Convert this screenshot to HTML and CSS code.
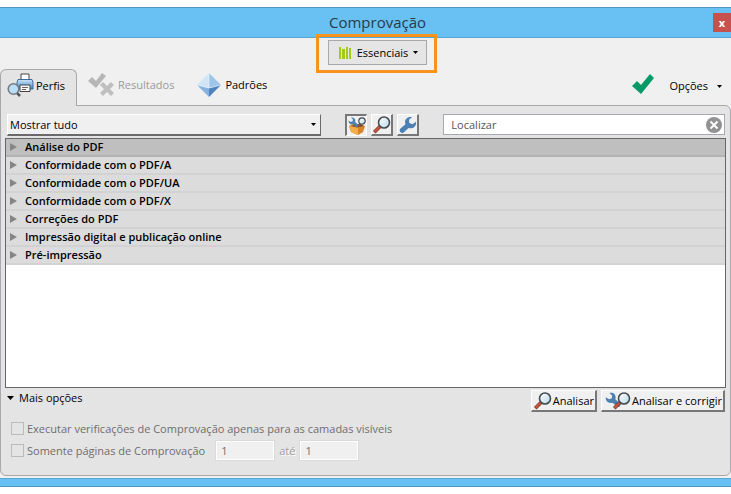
FILE: index.html
```html
<!DOCTYPE html>
<html lang="pt-BR">
<head>
<meta charset="utf-8">
<title>Comprovação</title>
<link rel="stylesheet" href="styles.css">
</head>
<body>
<svg class="defs" width="0" height="0" aria-hidden="true">
  <defs>
    <linearGradient id="lens" x1="0" y1="0" x2="1" y2="1"><stop offset="0" stop-color="#fff"/><stop offset="1" stop-color="#b9d9e8"/></linearGradient>
    <linearGradient id="feed" x1="0" y1="0" x2="0" y2="1"><stop offset="0" stop-color="#cfe6f8"/><stop offset="1" stop-color="#3f86cc"/></linearGradient>
  </defs>
  <symbol id="magnifier" viewBox="0 0 18 18">
    <path d="M7 10.500 2.500 15" stroke="#6b3028" stroke-width="3.500" stroke-linecap="square"/>
    <path d="M6.500 11 2.500 15" stroke="#c8553c" stroke-width="2.400" stroke-linecap="square"/>
    <circle cx="11" cy="6.500" r="5.500" fill="url(#lens)" stroke="#454b4f" stroke-width="1.600"/>
  </symbol>
  <symbol id="wrench" viewBox="0 0 18 18">
    <path d="M17 5.800 13.500 8.200 10.300 7 10 3.800 13 1.200C9.200 0 6 2.600 6 6.300L6.400 8.200 1.500 12.400C-.6 14.500 1.500 18 4.400 16.700L9.600 12C14.200 13.200 17.800 10 17 5.800Z" fill="#4c80b3"/>
  </symbol>
</svg>
<main class="window">
  <header class="titlebar">
    <h1>Comprovação</h1>
    <button class="close" type="button" aria-label="Fechar">x</button>
  </header>
  <div class="content">
    <div class="library">
      <div class="highlight">
        <button class="library-button" type="button">
          <svg width="13" height="12" viewBox="0 0 13 12" shape-rendering="crispEdges"><path d="M0 0h2v12H0zM3 2h3v10H3zM7 0h2v12H7zM10 1h2v11h-2z" fill="#a2cb1b"/></svg>
          Essenciais
          <svg class="caret" width="5" height="3" viewBox="0 0 5 3"><path d="M0 0h5L2.500 3z"/></svg>
        </button>
      </div>
    </div>
    <nav class="tabs">
      <button class="tab active" type="button">
        <svg width="27" height="25" viewBox="0 0 27 25">
          <path d="M14 1h8v7h-8z" fill="#fff" stroke="#444"/>
          <path d="M11 6.500h14l1 3v6.500h-16V9.500z" fill="url(#feed)" stroke="#396c9d"/>
          <path d="M13 12h10v6.500H13z" fill="#f8f8f8" stroke="#444"/>
          <path d="M15 14.500h6M15 16.500h4" stroke="#666"/>
          <path d="M9.500 19.500 13 23" stroke="#50555a" stroke-width="2.500"/>
          <circle cx="6.500" cy="16" r="5.300" fill="#b9def5" stroke="#727a80" stroke-width="1.500"/>
        </svg>
        Perfis
      </button>
      <button class="tab results" type="button" disabled>
        <svg width="26" height="24" viewBox="0 0 26 24"><path d="M0 8 4 4l4 4 6-8 4 3L8 15z" fill="#b6b6b6"/><path d="m12 12 3-3 4 4 4-4 3 3-4 4 4 4-3 3-4-4-4 4-3-3 4-4z" fill="#bfbfbf"/></svg>
        Resultados
      </button>
      <button class="tab standards" type="button">
        <svg width="24" height="24" viewBox="0 0 24 24"><path d="M12 0 0 12l12 3z" fill="#d2e5f7"/><path d="m12 0 12 12-12 3z" fill="#9dc5e9"/><path d="m0 12 12 3v9z" fill="#87b2df"/><path d="m24 12-12 3v9z" fill="#4d84bd"/><path d="M12 0v15L0 12m12 3 12-3" stroke="#e5f1fb" fill="none" stroke-width=".7"/></svg>
        Padrões
      </button>
      <svg class="status" width="24" height="22" viewBox="0 0 24 22"><path d="m1 13 5-5 4 4L19 1l4 4L10 21z" fill="#079a67"/></svg>
      <button class="options" type="button">Opções
        <svg class="caret" width="5" height="3" viewBox="0 0 5 3"><path d="M0 0h5L2.500 3z"/></svg>
      </button>
    </nav>
    <section class="panel">
      <div class="filters">
        <div class="picker">
          <select aria-label="Mostrar"><option>Mostrar tudo</option></select>
          <svg class="caret" width="5" height="3" viewBox="0 0 5 3"><path d="M0 0h5L2.500 3z"/></svg>
        </div>
        <div class="modes">
          <button class="raised pressed" type="button" aria-label="Perfis">
            <svg width="18" height="18" viewBox="0 0 18 18"><path d="m1 9 4-2 9 1 3 1-2 6-5 3-7-3z" fill="#d98424"/><path d="m1 9 9 2v7l-7-3z" fill="#f4ad48"/><path d="m3 9 7 1 6-1-5-2z" fill="#5d4128"/><use href="#wrench" width="11" height="11" transform="translate(11 0) scale(-1 1)"/><path d="m13 6-3 4" stroke="#a24b38" stroke-width="2"/><circle cx="14" cy="4" r="3.200" fill="url(#lens)" stroke="#454b4f" stroke-width="1.200"/></svg>
          </button>
          <button class="raised" type="button" aria-label="Verificações"><svg width="18" height="18"><use href="#magnifier"/></svg></button>
          <button class="raised" type="button" aria-label="Correções"><svg width="18" height="18"><use href="#wrench"/></svg></button>
        </div>
        <div class="search">
          <input type="text" placeholder="Localizar" aria-label="Localizar">
          <button type="button" aria-label="Limpar"><svg width="16" height="16" viewBox="0 0 16 16"><circle cx="8" cy="8" r="8" fill="#929292"/><path d="m4.500 4.500 7 7m0-7-7 7" stroke="#fff" stroke-width="2"/></svg></button>
        </div>
      </div>
      <ul class="profiles">
        <li class="selected"><button type="button">Análise do PDF</button></li>
        <li><button type="button">Conformidade com o PDF/A</button></li>
        <li><button type="button">Conformidade com o PDF/UA</button></li>
        <li><button type="button">Conformidade com o PDF/X</button></li>
        <li><button type="button">Correções do PDF</button></li>
        <li><button type="button">Impressão digital e publicação online</button></li>
        <li><button type="button">Pré-impressão</button></li>
      </ul>
      <div class="actions">
        <button class="more" type="button"><svg class="caret" width="7" height="4" viewBox="0 0 7 4"><path d="M0 0h7L3.500 4z"/></svg>Mais opções</button>
        <button class="raised action" type="button"><svg width="18" height="18"><use href="#magnifier"/></svg>Analisar</button>
        <button class="raised action" type="button"><svg width="27" height="18" viewBox="0 0 27 18"><use href="#wrench" width="16" height="16" transform="translate(17 0) scale(-1 1)"/><use href="#magnifier" x="9" width="18" height="18"/></svg>Analisar e corrigir</button>
      </div>
      <div class="settings">
        <div class="setting">
          <input type="checkbox" id="layers" disabled>
          <label for="layers">Executar verificações de Comprovação apenas para as camadas visíveis</label>
        </div>
        <div class="setting">
          <input type="checkbox" id="pages" disabled>
          <label for="pages">Somente páginas de Comprovação</label>
          <input class="page first" type="text" value="1" aria-label="Primeira página" disabled>
          <label class="until" for="last">até</label>
          <input class="page" id="last" type="text" value="1" disabled>
        </div>
      </div>
    </section>
  </div>
</main>
</body>
</html>
```
FILE: styles.css
```css
* { box-sizing: border-box; }

body {
  margin: 0;
  padding: 7px 0;
  background: #fff;
  color: #000;
  font: 11px/16px "Open Sans", "Noto Sans", sans-serif;
}

button, input, select {
  margin: 0;
  padding: 0;
  border: 0;
  border-radius: 0;
  background: none;
  color: inherit;
  font: inherit;
}

svg { display: block; flex: none; }
.defs { position: absolute; }

.window {
  display: flex;
  flex-direction: column;
  min-height: calc(100vh - 14px);
  background: #f0f0f0;
  border-top: 1px solid #4e97c2;
  border-bottom: 1px solid #4e97c2;
}

.window::after {
  content: "";
  height: 7px;
  background: #69c0f2;
  border-top: 1px solid #5aa6d2;
}

.titlebar {
  display: grid;
  grid-template-columns: 42px 1fr 18px;
  height: 30px;
  background: #69c0f2;
  border-bottom: 1px solid #5aa6d2;
}

.titlebar h1 {
  grid-column: 2;
  margin: 0;
  color: #293a45;
  font-size: 15px;
  font-weight: 400;
  line-height: 29px;
  text-align: center;
}

.close {
  height: 19px;
  margin-top: 5px;
  background: #c75050;
  color: #fff;
  font-weight: 700;
}

.content {
  display: flex;
  flex: 1;
  flex-direction: column;
  padding-bottom: 2px;
}

.library {
  display: flex;
  justify-content: center;
  height: 31px;
  padding: 2px 0 0 24px;
}

.highlight { position: relative; height: 25px; }

.highlight::after {
  content: "";
  position: absolute;
  inset: -6px -10px -8px -12px;
  border: 3px solid #f7941e;
  pointer-events: none;
}

.library-button {
  display: flex;
  align-items: center;
  gap: 5px;
  height: 25px;
  padding: 0 8px 0 10px;
  background: #e5e5e5;
  border: 1px solid #a8a8ad;
}

.tabs {
  position: relative;
  display: flex;
  height: 37px;
  margin-bottom: -1px;
}

.tab {
  display: flex;
  align-items: center;
  gap: 4px;
  height: 32px;
}

.tab.active {
  height: 37px;
  padding: 0 11px 5px 6px;
  gap: 2px;
  background: #e4e4e4;
  border: 1px solid #a8a8a8;
  border-bottom: 0;
  border-radius: 6px 6px 0 0;
}

.results { margin-left: 11px; color: #9a9a9a; }
.standards { margin-left: 23px; }
.status { margin: 4px 14px 0 auto; }

.options {
  display: flex;
  align-items: center;
  gap: 9px;
  height: 34px;
  margin-right: 9px;
}

.panel {
  display: flex;
  flex: 1;
  flex-direction: column;
  padding: 8px 4px 14px;
  background: #e4e4e4;
  border: 1px solid #a8a8ad;
  border-radius: 0 6px 6px;
}

.filters {
  display: flex;
  height: 22px;
  margin: 0 1px 2px 2px;
}

.picker {
  display: grid;
  flex: 315 1 0;
  align-items: center;
  background: #f0f0f0;
  border: 1px solid #fff;
  border-right: 1px solid #6a6a6a;
  border-bottom: 2px solid #6a6a6a;
}

.picker > * { grid-area: 1 / 1; }
.picker select { appearance: none; width: 100%; padding-left: 2px; }
.picker .caret { justify-self: end; margin-right: 4px; pointer-events: none; }

.modes { display: flex; gap: 4px; margin: 0 24px; }

.raised {
  display: flex;
  align-items: center;
  justify-content: center;
  width: 22px;
  height: 22px;
  background: #f0f0f0;
  border: 1px solid #fff;
  border-right: 2px solid #777;
  border-bottom: 2px solid #777;
}

.pressed {
  border: 1px solid #fff;
  border-top: 2px solid #777;
  border-left: 2px solid #777;
}

.search {
  display: flex;
  flex: 280 1 0;
  align-items: center;
  height: 21px;
  padding-right: 2px;
  background: #fff;
  border: 1px solid #a8a8b0;
}

.search input { flex: 1; min-width: 0; padding-left: 7px; }
.search input::placeholder { color: #555; opacity: 1; }

.profiles {
  flex: 1;
  min-height: 128px;
  margin: 0;
  padding: 0;
  background: #fff;
  border: 1px solid #66666a;
  list-style: none;
}

.profiles li {
  height: 18px;
  background: #dcdcdc;
  border-bottom: 2px solid #d2d2d2;
}

.profiles .selected { background: #bfbfbf; border-color: #b3b3b3; }

.profiles button {
  display: flex;
  align-items: center;
  gap: 8px;
  width: 100%;
  height: 16px;
  padding-left: 4px;
  font-weight: 600;
}

.profiles button::before {
  content: "";
  border: solid transparent;
  border-width: 4px 0 4px 7px;
  border-left-color: #858585;
}

.actions {
  display: flex;
  gap: 4px;
  height: 24px;
  padding: 2px 1px 0;
}

.more {
  display: flex;
  align-items: center;
  align-self: flex-start;
  gap: 5px;
  margin-right: auto;
  padding-left: 1px;
}

.action { width: auto; gap: 1px; padding: 0 1px 0 2px; }

.settings {
  display: grid;
  gap: 1px;
  margin-top: 6px;
  padding-left: 6px;
  color: #6e6e6e;
}

.setting { display: flex; align-items: center; height: 21px; }

.setting [type="checkbox"] {
  appearance: none;
  width: 13px;
  height: 13px;
  margin-right: 3px;
  border: 1px solid #bcbcbc;
}

.page {
  width: 60px;
  height: 21px;
  padding-left: 5px;
  background: #f0f0f0;
  border: 1px solid #dadada;
  outline: 1px solid #fff;
  outline-offset: -2px;
}

.first { margin-left: 10px; }
.until { margin: 0 4px; color: #9d9d9d; text-shadow: 1px 1px #fff; }
```
